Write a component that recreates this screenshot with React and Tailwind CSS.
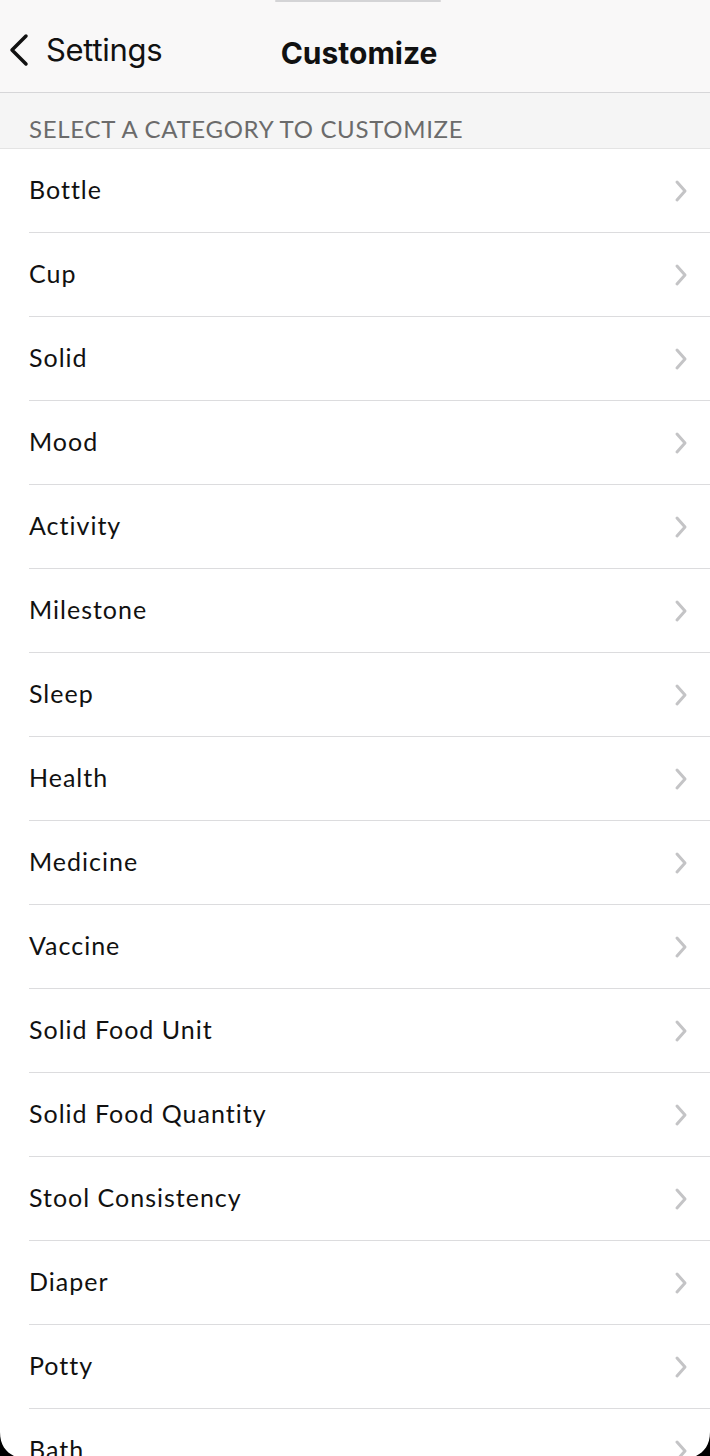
import React from 'react';

const categories = [
  'Bottle',
  'Cup',
  'Solid',
  'Mood',
  'Activity',
  'Milestone',
  'Sleep',
  'Health',
  'Medicine',
  'Vaccine',
  'Solid Food Unit',
  'Solid Food Quantity',
  'Stool Consistency',
  'Diaper',
  'Potty',
  'Bath',
];

const Chevron = () => (
  <svg width="14" height="24" viewBox="0 0 14 24" fill="none">
    <path d="M3 3l8 9-8 9" stroke="#c4c4c6" strokeWidth="3" strokeLinecap="round" strokeLinejoin="round" />
  </svg>
);

const Row = ({ label }) => (
  <div className="h-[84px] pl-[29px] flex">
    <div className="flex-1 flex items-center justify-between pr-[22px] border-b border-[#dcdcde]">
      <span className="text-[25px] text-[#111] font-['Lato',sans-serif] tracking-[1px] pb-[1px]">{label}</span>
      <Chevron />
    </div>
  </div>
);

const App = () => {
  return (
    <div className="relative w-[710px] h-[1456px] overflow-hidden bg-white">
      {/* Nav bar */}
      <div className="h-[93px] bg-[#f9f8f8] border-b border-[#d6d6d8] flex items-center relative font-['Inter',sans-serif]">
        <div className="absolute top-0 left-[275px] w-[166px] h-[2px] rounded-full bg-[#d4d4d6]" />
        <div className="flex items-center pl-[8px] gap-[16px] pt-[8px]">
          <svg width="22" height="34" viewBox="0 0 22 34" fill="none">
            <path d="M18 3L4 17l14 14" stroke="#111" strokeWidth="3.5" strokeLinecap="round" strokeLinejoin="round" />
          </svg>
          <span className="text-[31px] text-[#111] tracking-[-0.3px]">Settings</span>
        </div>
        <span className="absolute left-0 right-0 top-[31px] text-center pl-[8px] text-[30px] font-bold text-[#111]">
          Customize
        </span>
      </div>

      {/* Section header */}
      <div className="h-[56px] bg-[#f5f5f5] border-b border-[#e4e4e4] pl-[29px] flex items-end pb-[1px]">
        <span className="text-[24px] text-[#6b6b6b] font-['Lato',sans-serif] tracking-[0.7px]">
          SELECT A CATEGORY TO CUSTOMIZE
        </span>
      </div>

      {/* List */}
      <div className="flex flex-col">
        {categories.map((c) => (
          <Row key={c} label={c} />
        ))}
      </div>

      {/* Screen corners */}
      <svg className="absolute left-0 bottom-0" width="24" height="24" viewBox="0 0 24 24">
        <path d="M0 0C0 13 6 20 14 24H0z" fill="#000" />
      </svg>
      <svg className="absolute right-0 bottom-0" width="24" height="24" viewBox="0 0 24 24">
        <path d="M24 0C24 13 18 20 10 24H24z" fill="#000" />
      </svg>
    </div>
  );
};

export default App;
